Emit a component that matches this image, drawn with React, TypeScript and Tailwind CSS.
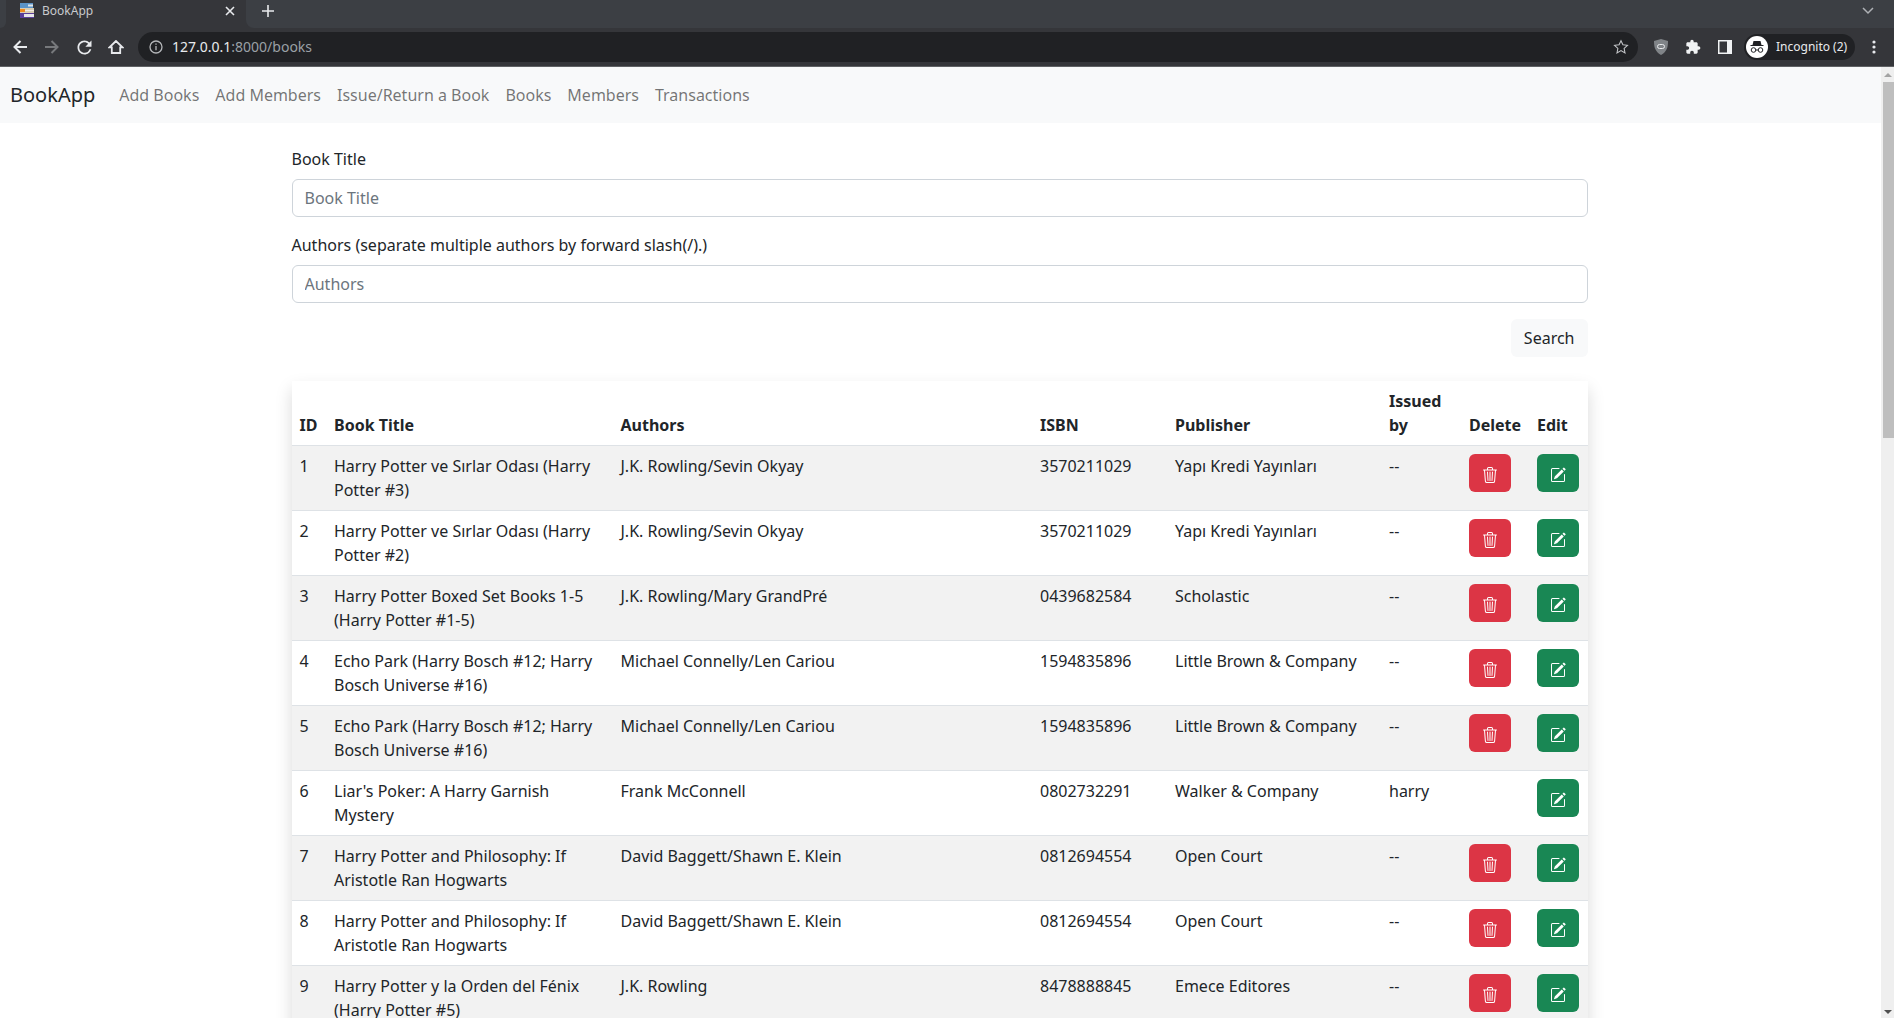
import { BsTrash3, BsPencilSquare } from 'react-icons/bs';

const books = [
  { id: 1, title: 'Harry Potter ve Sırlar Odası (Harry Potter #3)', authors: 'J.K. Rowling/Sevin Okyay', isbn: '3570211029', publisher: 'Yapı Kredi Yayınları', issued: '--' },
  { id: 2, title: 'Harry Potter ve Sırlar Odası (Harry Potter #2)', authors: 'J.K. Rowling/Sevin Okyay', isbn: '3570211029', publisher: 'Yapı Kredi Yayınları', issued: '--' },
  { id: 3, title: 'Harry Potter Boxed Set Books 1-5 (Harry Potter #1-5)', authors: 'J.K. Rowling/Mary GrandPré', isbn: '0439682584', publisher: 'Scholastic', issued: '--' },
  { id: 4, title: 'Echo Park (Harry Bosch #12; Harry Bosch Universe #16)', authors: 'Michael Connelly/Len Cariou', isbn: '1594835896', publisher: 'Little Brown & Company', issued: '--' },
  { id: 5, title: 'Echo Park (Harry Bosch #12; Harry Bosch Universe #16)', authors: 'Michael Connelly/Len Cariou', isbn: '1594835896', publisher: 'Little Brown & Company', issued: '--' },
  { id: 6, title: "Liar's Poker: A Harry Garnish Mystery", authors: 'Frank McConnell', isbn: '0802732291', publisher: 'Walker & Company', issued: 'harry' },
  { id: 7, title: 'Harry Potter and Philosophy: If Aristotle Ran Hogwarts', authors: 'David Baggett/Shawn E. Klein', isbn: '0812694554', publisher: 'Open Court', issued: '--' },
  { id: 8, title: 'Harry Potter and Philosophy: If Aristotle Ran Hogwarts', authors: 'David Baggett/Shawn E. Klein', isbn: '0812694554', publisher: 'Open Court', issued: '--' },
  { id: 9, title: 'Harry Potter y la Orden del Fénix (Harry Potter #5)', authors: 'J.K. Rowling', isbn: '8478888845', publisher: 'Emece Editores', issued: '--' },
];

const navLinks = ['Add Books', 'Add Members', 'Issue/Return a Book', 'Books', 'Members', 'Transactions'];

const Favicon = () => (
  <svg width="16" height="16" viewBox="0 0 16 16" className="shrink-0">
    <rect x="1" y="0" width="13" height="5" fill="#5b93c7" />
    <rect x="9" y="1.5" width="5" height="2" fill="#dfe6ea" />
    <rect x="1" y="5" width="14" height="5" fill="#d8cdb4" />
    <rect x="1" y="6" width="5" height="3" fill="#f08a1d" />
    <rect x="6" y="7" width="9" height="1" fill="#f2ede1" />
    <rect x="1" y="10" width="14" height="5" fill="#5a3f9a" />
    <rect x="5" y="11" width="10" height="3" fill="#e6e6ea" />
  </svg>
);

const BrowserChrome = () => (
  <div className="h-[67px] shrink-0 bg-[#35363a] text-white font-['Noto_Sans',sans-serif]">
    {/* tab strip */}
    <div className="h-[28px] flex">
      <div className="w-[6px] bg-[#3c3f44] rounded-br-lg shrink-0" />
      <div className="w-[240px] flex items-center pl-[13px] pr-[11px] pb-[6px] shrink-0">
        <Favicon />
        <span className="ml-[7px] text-[12px] leading-[16px] text-[#c8cacd] flex-1">BookApp</span>
        <svg width="10" height="10" viewBox="0 0 10 10" stroke="#e8eaed" strokeWidth="1.6" className="shrink-0">
          <path d="M1 1l8 8M9 1l-8 8" />
        </svg>
      </div>
      <div className="flex-1 bg-[#3c3f44] rounded-bl-lg flex items-center justify-between pb-[6px] pl-[16px] pr-[19px]">
        <svg width="12" height="12" viewBox="0 0 12 12" stroke="#e8eaed" strokeWidth="1.6">
          <path d="M6 0v12M0 6h12" />
        </svg>
        <svg width="14" height="8" viewBox="0 0 14 8" fill="none" stroke="#aeb1b5" strokeWidth="1.5">
          <path d="M2 1l5 5 5-5" />
        </svg>
      </div>
    </div>
    {/* toolbar */}
    <div className="h-[39px] flex items-center border-b border-[#5f6164]">
      <div className="flex items-center w-[138px] shrink-0">
        <svg width="16" height="16" viewBox="0 0 16 16" fill="none" stroke="#e8eaed" strokeWidth="2" className="ml-[12px]">
          <path d="M15 8H3M8.5 2L2.5 8l6 6" />
        </svg>
        <svg width="16" height="16" viewBox="0 0 16 16" fill="none" stroke="#77797c" strokeWidth="2" className="ml-[16px]">
          <path d="M1 8h12M7.5 2l6 6-6 6" />
        </svg>
        <svg width="21" height="21" viewBox="0 0 24 24" fill="#e8eaed" className="ml-[14px]">
          <path d="M17.65 6.35A7.958 7.958 0 0 0 12 4c-4.42 0-7.99 3.58-7.99 8s3.57 8 7.99 8c3.73 0 6.84-2.55 7.73-6h-2.08A5.99 5.99 0 0 1 12 18c-3.31 0-6-2.69-6-6s2.69-6 6-6c1.66 0 3.14.69 4.22 1.78L13 11h7V4l-2.35 2.35z" />
        </svg>
        <svg width="16" height="14" viewBox="0 0 16 14" fill="none" stroke="#e8eaed" strokeWidth="1.8" className="ml-[13px]">
          <path d="M8 1L1.5 7.3h2.3V13h8.4V7.3h2.3z" />
        </svg>
      </div>
      <div className="w-[1500px] h-[30px] rounded-full bg-[#202124] flex items-center pl-[11px] pr-[9px] shrink-0">
        <svg width="14" height="14" viewBox="0 0 14 14" fill="none" stroke="#b5b7ba" strokeWidth="1.3" className="shrink-0">
          <circle cx="7" cy="7" r="6" />
          <path d="M7 6v4.2M7 3.4v1.4" />
        </svg>
        <span className="ml-[9px] text-[14px] text-[#e8eaed]">127.0.0.1<span className="text-[#9aa0a6]">:8000/books</span></span>
        <div className="flex-1" />
        <svg width="16" height="16" viewBox="0 0 24 24" fill="none" stroke="#c4c6c9" strokeWidth="1.600">
          <path d="M12 2.5l2.9 6.2 6.8.8-5 4.6 1.3 6.7-6-3.4-6 3.4 1.3-6.7-5-4.6 6.8-.8z" />
        </svg>
      </div>
      <svg width="14" height="16" viewBox="0 0 14 16" className="ml-[16px] shrink-0">
        <path d="M7 0L14 2c0 6-1 10.500-7 14C1 12.500 0 8 0 2z" fill="#808488" />
        <rect x="3.500" y="5.500" width="7" height="4" rx="2" fill="none" stroke="#e8eaed" strokeWidth="1" />
      </svg>
      <svg width="16" height="16" viewBox="0 0 24 24" fill="#f1f3f4" className="ml-[17px] shrink-0">
        <path d="M20.500 11H19V7c0-1.100-.9-2-2-2h-4V3.500C13 2.120 11.880 1 10.500 1S8 2.120 8 3.500V5H4c-1.100 0-1.990.9-1.990 2v3.800H3.500c1.490 0 2.700 1.210 2.700 2.700s-1.210 2.700-2.700 2.700H2V20c0 1.100.9 2 2 2h3.800v-1.500c0-1.490 1.210-2.700 2.700-2.700 1.490 0 2.700 1.210 2.700 2.700V22H17c1.100 0 2-.9 2-2v-4h1.500c1.380 0 2.500-1.120 2.500-2.500S21.880 11 20.500 11z" />
      </svg>
      <svg width="14" height="14" viewBox="0 0 14 14" className="ml-[17px] shrink-0">
        <rect x="0" y="0" width="14" height="14" fill="#f1f3f4" />
        <rect x="1.500" y="1.500" width="7.500" height="11" fill="#35363a" />
      </svg>
      <div className="ml-[12px] w-[111px] h-[26px] rounded-full bg-[#202124] flex items-center pl-[2px] shrink-0">
        <div className="w-[22px] h-[22px] rounded-full bg-white flex items-center justify-center shrink-0">
          <svg width="16" height="14" viewBox="0 0 16 14" fill="none">
            <path d="M4.500 1h7l1 4h-9z" fill="#202124" />
            <path d="M1.500 5.500h13" stroke="#202124" strokeWidth="1" />
            <circle cx="4.500" cy="10" r="2.300" stroke="#202124" strokeWidth="1" />
            <circle cx="11.500" cy="10" r="2.300" stroke="#202124" strokeWidth="1" />
            <path d="M6.800 10h2.400" stroke="#202124" strokeWidth="1" />
          </svg>
        </div>
        <span className="ml-[8px] text-[12px] text-[#e8eaed] whitespace-nowrap">Incognito (2)</span>
      </div>
      <svg width="4" height="14" viewBox="0 0 4 14" fill="#e8eaed" className="ml-[17px] shrink-0">
        <circle cx="2" cy="2" r="1.600" />
        <circle cx="2" cy="7" r="1.600" />
        <circle cx="2" cy="12" r="1.600" />
      </svg>
    </div>
  </div>
);

const Scrollbar = () => (
  <div className="w-[13px] shrink-0 bg-[#efefef] flex flex-col items-center">
    <div className="h-[15px] shrink-0 flex items-center justify-center">
      <div className="w-0 h-0 border-x-[4px] border-x-transparent border-b-[4px] border-b-[#a3a3a3]" />
    </div>
    <div className="w-[11px] h-[356px] bg-[#bebebe] self-end" />
    <div className="flex-1" />
    <div className="h-[15px] shrink-0 pt-[3px] flex items-center justify-center">
      <div className="w-0 h-0 border-x-[4px] border-x-transparent border-t-[4px] border-t-[#505050]" />
    </div>
  </div>
);

export default function App() {
  return (
    <div className="h-screen w-full overflow-hidden flex flex-col bg-white text-[#212529] font-['Noto_Sans',sans-serif] text-[16px] leading-[24px]">
      <BrowserChrome />
      <div className="flex-1 flex min-h-0">
        <div className="flex-1 min-w-0 overflow-hidden">
          <nav className="h-[56px] bg-[#f8f9fa] flex items-center pl-[10px]">
            <span className="text-[20px] leading-[30px] text-[#212529] mr-[16px]">BookApp</span>
            {navLinks.map(l => (
              <a key={l} className="px-[8px] text-[#0000008c] whitespace-nowrap">{l}</a>
            ))}
          </nav>

          <div className="pr-[2px]">
            <div className="w-[1296px] mx-auto mt-[24px]">
              <label className="block mb-[8px]">Book Title</label>
              <input
                placeholder="Book Title"
                className="block w-full h-[38px] px-[12px] border border-[#ced4da] rounded-[6px] bg-white outline-none placeholder:text-[#6c757d]"
              />
              <label className="block mt-[16px] mb-[8px]">Authors (separate multiple authors by forward slash(/).)</label>
              <input
                placeholder="Authors"
                className="block w-full h-[38px] px-[12px] border border-[#ced4da] rounded-[6px] bg-white outline-none placeholder:text-[#6c757d]"
              />
              <div className="flex justify-end mt-[16px]">
                <button className="h-[38px] px-[13px] rounded-[6px] bg-[#f8f9fa] text-[#212529]">Search</button>
              </div>

              <div className="mt-[24px] shadow-[0_8px_16px_rgba(0,0,0,0.15)]">
                <table className="w-full table-fixed border-collapse">
                  <colgroup>
                    <col className="w-[34.5px]" />
                    <col className="w-[286.5px]" />
                    <col className="w-[419.5px]" />
                    <col className="w-[135px]" />
                    <col className="w-[214px]" />
                    <col className="w-[80px]" />
                    <col className="w-[68px]" />
                    <col className="w-[58.5px]" />
                  </colgroup>
                  <thead>
                    <tr className="border-b border-[#dee2e6] align-bottom text-left">
                      {['ID', 'Book Title', 'Authors', 'ISBN', 'Publisher', 'Issued by', 'Delete', 'Edit'].map(h => (
                        <th key={h} className="p-[8px] font-bold">{h}</th>
                      ))}
                    </tr>
                  </thead>
                  <tbody>
                    {books.map((b, i) => (
                      <tr key={b.id} className={`border-b border-[#dee2e6] align-top ${i % 2 === 0 ? 'bg-[#f2f2f2]' : 'bg-white'}`}>
                        <td className="p-[8px]">{b.id}</td>
                        <td className="p-[8px]">{b.title}</td>
                        <td className="p-[8px]">{b.authors}</td>
                        <td className="p-[8px]">{b.isbn}</td>
                        <td className="p-[8px]">{b.publisher}</td>
                        <td className="p-[8px]">{b.issued}</td>
                        <td className="p-[8px]">
                          {b.issued === '--' && (
                            <button className="w-[42px] h-[38px] pt-[3px] rounded-[6px] bg-[#dc3545] text-white flex items-center justify-center">
                              <BsTrash3 className="w-[16px] h-[16px]" />
                            </button>
                          )}
                        </td>
                        <td className="p-[8px]">
                          <button className="w-[42px] h-[38px] pt-[3px] rounded-[6px] bg-[#198754] text-white flex items-center justify-center">
                            <BsPencilSquare className="w-[16px] h-[16px]" />
                          </button>
                        </td>
                      </tr>
                    ))}
                  </tbody>
                </table>
              </div>
            </div>
          </div>
        </div>
        <Scrollbar />
      </div>
    </div>
  );
}
